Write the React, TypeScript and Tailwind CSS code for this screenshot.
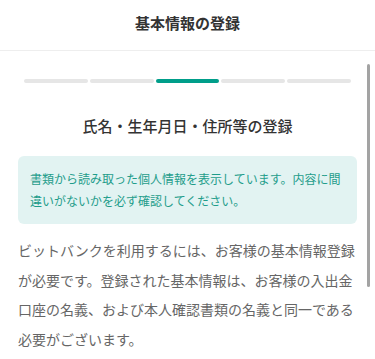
const steps = [0, 1, 2, 3, 4];
const current = 2;

export default function App() {
  return (
    <div className="relative h-[359px] overflow-hidden bg-white font-['Noto_Sans_CJK_JP','Noto_Sans',sans-serif]">
      <header className="flex h-[51px] items-center justify-center border-b border-[#eeeeee] pb-[4px]">
        <h1 className="text-[15px] font-bold text-[#333333]">基本情報の登録</h1>
      </header>

      <main className="px-[18px] pt-[28px]">
        <div className="flex gap-[2px] px-[6px]">
          {steps.map((s) => (
            <div
              key={s}
              className={`h-[4px] flex-1 rounded-full ${s === current ? "bg-[#009e8a]" : "bg-[#e6e6e6]"}`}
            />
          ))}
        </div>

        <h2 className="mt-[32px] text-center text-[15px] leading-[22px] font-medium text-[#333333]">
          氏名・生年月日・住所等の登録
        </h2>

        <div className="mt-[19px] rounded-[6px] bg-[#e2f3f2] px-[12px] py-[12px] text-[12px] leading-[22px] text-[#1f9d8b]">
          書類から読み取った個人情報を表示しています。内容に間違いがないかを必ず確認してください。
        </div>

        <p className="mt-[12px] text-[14px] leading-[29.5px] text-[#666666]">
          ビットバンクを利用するには、お客様の基本情報登録が必要です。登録された基本情報は、お客様の入出金口座の名義、および本人確認書類の名義と同一である必要がございます。
        </p>
      </main>

      <div className="absolute top-[64px] right-[5px] h-[223px] w-[3px] rounded-full bg-[#a3a3a3]" />
    </div>
  );
}
